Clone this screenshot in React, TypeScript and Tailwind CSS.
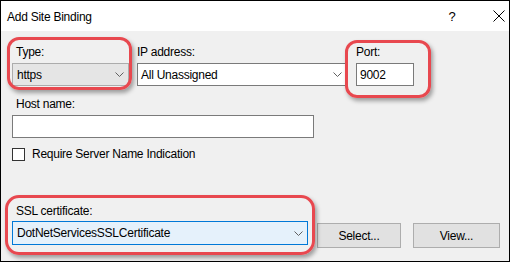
import React from "react";

const Chevron = () => (
  <svg width="9" height="5" viewBox="0 0 9 5" className="shrink-0">
    <path d="M0.5 0.5 L4.5 4.5 L8.5 0.5" fill="none" stroke="#606060" strokeWidth="1" />
  </svg>
);

export default function App() {
  return (
    <div
      className="relative w-[510px] h-[262px] border border-black bg-[#f0f0f0] flex flex-col text-[12px] text-black tracking-[-0.25px] overflow-hidden"
      style={{ fontFamily: '"Segoe UI", "Liberation Sans", Arial, sans-serif' }}
    >
      {/* title bar */}
      <div className="h-[30px] bg-white flex items-center justify-between pl-[6px] shrink-0">
        <span className="pt-[2px]">Add Site Binding</span>
        <div className="flex items-center h-full">
          <span className="w-[14px] text-center text-[13px] mr-[34px] pt-[1px]">?</span>
          <svg width="12" height="12" viewBox="0 0 12 12" className="mr-[4px]">
            <path d="M0.5 0.5 L11.5 11.5 M11.5 0.5 L0.5 11.5" stroke="#000" strokeWidth="1" />
          </svg>
        </div>
      </div>

      {/* body */}
      <div className="flex flex-col pl-[11px] pt-[14px]">
        <div className="flex items-start">
          <div className="flex flex-col w-[117px]">
            <span className="pl-[4px] h-[15px] leading-[15px]">Type:</span>
            <div className="mt-[3px] h-[23px] bg-[#e5e5e5] border border-[#acacac] flex items-center justify-between pl-[4px] pr-[4px]">
              <span>https</span>
              <Chevron />
            </div>
          </div>
          <div className="flex flex-col w-[209px] ml-[8px]">
            <span className="h-[15px] leading-[15px]">IP address:</span>
            <div className="mt-[3px] h-[23px] bg-white border border-[#7a7a7a] flex items-center justify-between pl-[3px] pr-[3px]">
              <span>All Unassigned</span>
              <Chevron />
            </div>
          </div>
          <div className="flex flex-col w-[58px] ml-[10px]">
            <span className="h-[15px] leading-[15px]">Port:</span>
            <div className="mt-[3px] h-[23px] bg-white border border-[#7a7a7a] flex items-center pl-[3px]">
              <span>9002</span>
            </div>
          </div>
        </div>

        <span className="pl-[4px] mt-[11px] h-[15px] leading-[15px]">Host name:</span>
        <div className="mt-[3px] w-[302px] h-[23px] bg-white border border-[#7a7a7a]" />

        <div className="mt-[9px] h-[14px] flex items-center">
          <div className="w-[13px] h-[13px] bg-white border border-[#333333]" />
          <span className="ml-[7px]">Require Server Name Indication</span>
        </div>

        <span className="pl-[4px] mt-[43px] h-[15px] leading-[15px]">SSL certificate:</span>
        <div className="flex items-start mt-[2px]">
          <div className="w-[296px] h-[24px] bg-[#e5f1fb] border border-[#0078d7] flex items-center justify-between pl-[4px] pr-[4px]">
            <span>DotNetServicesSSLCertificate</span>
            <Chevron />
          </div>
          <button className="ml-[9px] mt-[2px] w-[84px] h-[25px] bg-[#e1e1e1] border border-[#adadad] flex items-center justify-center">
            Select...
          </button>
          <button className="ml-[12px] mt-[2px] w-[87px] h-[25px] bg-[#e1e1e1] border border-[#adadad] flex items-center justify-center">
            View...
          </button>
        </div>
      </div>

      {/* annotation highlights */}
      <div className="absolute left-[6px] top-[36px] w-[125px] h-[53px] rounded-[12px] border-[3px] border-[#e8484f] shadow-[2px_3px_4px_rgba(0,0,0,0.35)]" />
      <div className="absolute left-[344px] top-[39px] w-[86px] h-[58px] rounded-[12px] border-[3px] border-[#e8484f] shadow-[2px_3px_4px_rgba(0,0,0,0.35)]" />
      <div className="absolute left-[4px] top-[194px] w-[310px] h-[60px] rounded-[14px] border-[3px] border-[#e8484f] shadow-[2px_3px_4px_rgba(0,0,0,0.35)]" />
    </div>
  );
}
